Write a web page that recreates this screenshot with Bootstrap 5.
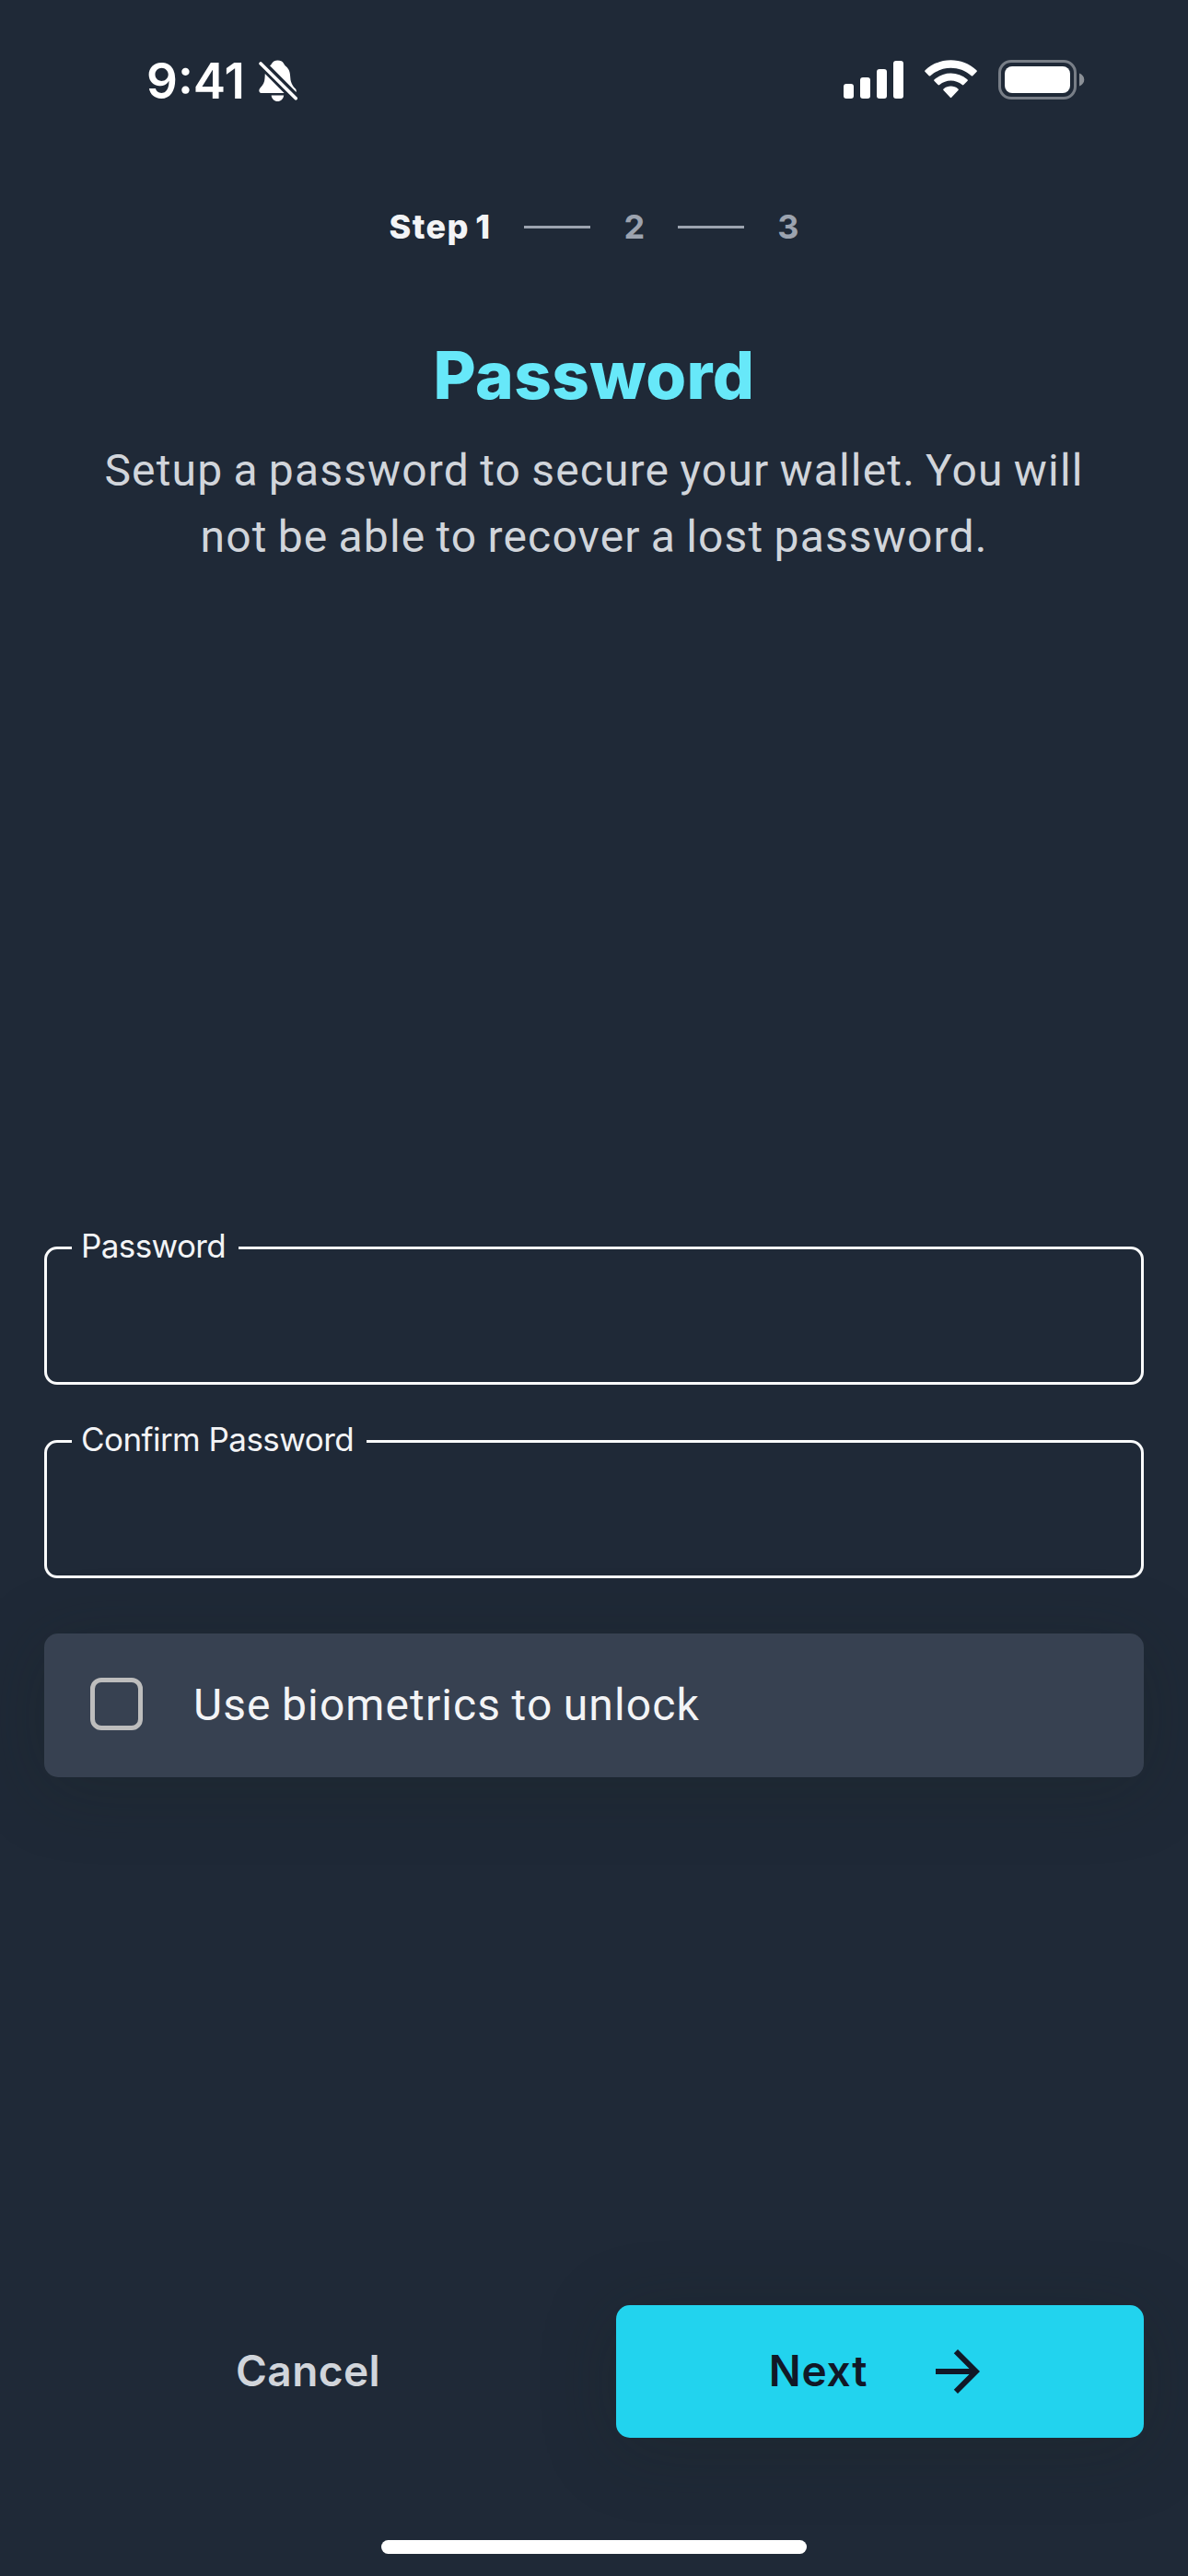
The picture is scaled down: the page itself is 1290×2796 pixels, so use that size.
<!DOCTYPE html>
<html lang="en">
<head>
<meta charset="utf-8">
<meta name="viewport" content="width=device-width, initial-scale=1">
<title>Password</title>
<link rel="stylesheet" href="https://cdn.jsdelivr.net/npm/bootstrap@5.3.0/dist/css/bootstrap.min.css">
<style>
  body { background: #1f2937; color: #f3f4f6; font-family: Inter, "Liberation Sans", sans-serif; }
  svg { display: block; flex: none; }
  .screen { height: 2796px; padding: 0 48px; overflow: hidden; }

  .status-bar { height: 222px; padding: 58px 64px 0 111px; color: #fff; }
  .clock { font-size: 53px; font-weight: 600; line-height: 60px; width: 122px; }
  .indicators { height: 57px; }
  .wifi { margin: 0 23px; }

  .stepper { gap: 36px; height: 49px; font-size: 36px; font-weight: 700; line-height: 49px; color: #9ca3af; }
  .stepper .current { color: #f3f4f6; font-weight: 800; letter-spacing: 1.4px; word-spacing: -3px; }
  .stepper .rule { width: 72px; height: 3px; background: #9ca3af; }

  .title { margin: 94px 0 26px; font-size: 71px; font-weight: 800; line-height: 84px; letter-spacing: .4px; color: #67e8f9; }
  .intro { width: 1110px; font: 400 48px/72px Roboto, sans-serif; letter-spacing: 1.15px; word-spacing: -1.9px; color: #d1d5db; }

  .form-area { margin-top: 708px; }
  .outlined { height: 176px; border: 3px solid #f9fafb; border-radius: 14px; }
  .outlined + .outlined { margin-top: 34px; }
  .outlined legend { float: none; width: 181px; margin: 0 0 0 27px; padding: 0 0 4px 10px; font-size: 35px; line-height: 51px; letter-spacing: -.6px; white-space: nowrap; }
  .outlined legend.wide { width: 320px; letter-spacing: -.55px; }
  .outlined input { height: 110px; background: transparent; border: 0; box-shadow: none; color: inherit; font-size: 48px; }

  .option { height: 156px; margin-top: 60px; padding: 0 50px 4px; gap: 55px; border-radius: 15px; background: #374151; box-shadow: 0 12px 80px rgba(22, 34, 26, .25); font: 400 48px/72px Roboto, sans-serif; letter-spacing: 1.1px; word-spacing: -1.6px; }
  .option .caption-text { padding-top: 3px; }
  .tick { width: 57px; height: 57px; border: 5px solid #bdbdbd; border-radius: 12px; }

  .actions { gap: 48px; margin-top: 573px; }
  .actions .btn { height: 144px; border: 0; border-radius: 15px; padding: 0 0 1px; font-size: 46px; font-weight: 600; line-height: 71px; }
  .btn-cancel { color: #d1d5db; letter-spacing: .4px; }
  .btn-next { gap: 62px; background: #22d3ee; color: #111827; letter-spacing: .8px; box-shadow: 0 12px 80px rgba(22, 34, 26, .25); }
  .home-bar { width: 462px; height: 15px; margin-top: 111px; border-radius: 8px; background: #fff; }
</style>
</head>
<body>
<main class="screen d-flex flex-column">
  <header class="status-bar d-flex justify-content-between align-items-start">
    <div class="d-flex align-items-center">
      <div class="clock">9:41</div>
      <svg width="42" height="46" viewBox="0 0 42 46" fill="#fff" aria-label="Silent">
        <path d="M12 6.2C14.300 5.200 14.500 0.400 20.500 0.400C27 0.400 27 5 29.500 7C33.500 10.500 34 14 34.300 19.500C34.600 25.500 37.500 29 40 31.500C40.800 32.600 40.900 33.700 40.600 34.900Z"/>
        <path d="M6.800 15L27.600 35.900H2.500C.2 35.900-.4 32.600 1.300 30.800C5 27 6.300 24 6.500 20Z"/>
        <path d="M13.600 38.500H27.200C26.500 42.600 24 45 20.400 45S14.300 42.600 13.600 38.500Z"/>
        <path d="M2.100 4L40.200 41.800" stroke="#1f2937" stroke-width="8"/>
        <path d="M2.100 4L40.200 41.800" stroke="#fff" stroke-width="3.700" stroke-linecap="round"/>
      </svg>
    </div>
    <div class="indicators d-flex align-items-center">
      <svg width="65" height="41" viewBox="0 0 65 41" fill="#fff" aria-label="Signal">
        <rect y="25" width="11" height="16" rx="3"/><rect x="18" y="18" width="11" height="23" rx="3"/><rect x="36" y="9" width="11" height="32" rx="3"/><rect x="54" width="11" height="41" rx="3"/>
      </svg>
      <svg class="wifi" width="57" height="43" viewBox="0 0 57 43" fill="#fff" aria-label="Wi-Fi">
        <path d="M.6 13.100Q-.3 12.200.6 11.300C16-3.500 41-3.500 56.400 11.300Q57.300 12.200 56.400 13.100L52.300 17.200Q51.500 17.900 50.700 17.200C38 6 19 6 6.300 17.200Q5.500 17.900 4.700 17.200Z"/>
        <path d="M10.600 23.100Q9.700 22.200 10.600 21.300C21 12.200 36 12.200 46.400 21.300Q47.300 22.200 46.400 23.100L42.400 27.100Q41.600 27.800 40.800 27.100C33.600 20.900 23.400 20.900 16.200 27.100Q15.400 27.800 14.600 27.100Z"/>
        <path d="M20.500 33.100Q19.600 32.200 20.600 31.400C25.200 27.600 31.800 27.600 36.400 31.400Q37.400 32.200 36.500 33.100L29.200 40.800Q28.500 41.500 27.800 40.800Z"/>
      </svg>
      <svg width="94" height="43" viewBox="0 0 94 43" aria-label="Battery">
        <rect x="1.500" y="1.500" width="82" height="40" rx="12.500" fill="none" stroke="#787e87" stroke-width="3"/>
        <rect x="7" y="7" width="71" height="29" rx="8" fill="#fff"/>
        <path d="M88 14.500C95 17 95 26 88 28.500Z" fill="#8b9097"/>
      </svg>
    </div>
  </header>

  <nav class="stepper d-flex justify-content-center align-items-center" aria-label="Progress">
    <span class="current">Step 1</span>
    <span class="rule"></span>
    <span>2</span>
    <span class="rule"></span>
    <span>3</span>
  </nav>

  <h1 class="title text-center">Password</h1>
  <p class="intro text-center align-self-center mb-0">Setup a password to secure your wallet. You will not be able to recover a lost password.</p>

  <form class="form-area">
    <fieldset class="outlined">
      <legend>Password</legend>
      <input class="form-control" type="password" aria-label="Password">
    </fieldset>
    <fieldset class="outlined">
      <legend class="wide">Confirm Password</legend>
      <input class="form-control" type="password" aria-label="Confirm Password">
    </fieldset>
    <label class="option d-flex align-items-center">
      <span class="tick" role="checkbox" aria-checked="false"></span>
      <span class="caption-text">Use biometrics to unlock</span>
    </label>
  </form>

  <div class="actions d-flex">
    <button class="btn btn-cancel w-50" type="button">Cancel</button>
    <button class="btn btn-next w-50 d-flex justify-content-center align-items-center" type="button">
      <span>Next</span>
      <svg width="72" height="72" viewBox="0 0 24 24" fill="currentColor"><path d="M12 4l-1.410 1.410L16.170 11H4v2h12.170l-5.580 5.590L12 20l8-8z"/></svg>
    </button>
  </div>
  <div class="home-bar align-self-center"></div>
</main>
<script src="https://cdn.jsdelivr.net/npm/bootstrap@5.3.0/dist/js/bootstrap.bundle.min.js"></script>
</body>
</html>
